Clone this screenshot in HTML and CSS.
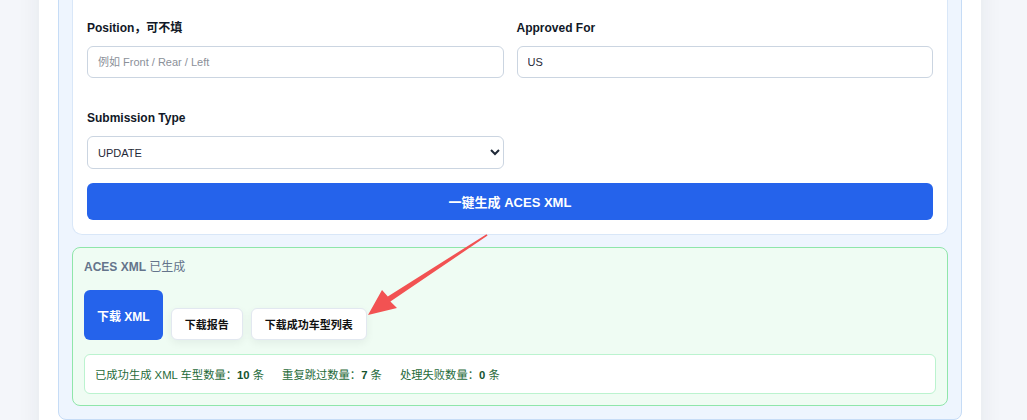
FILE: index.html
```html
<html>
<head>
<meta charset="utf-8">
<link rel="stylesheet" href="styles.css">
</head>
<body>
<div class="panel">
<div class="section">
	<div class="card">
		<div class="grid">
			<div class="field">
				<label class="lbl">Position，可不填</label>
				<input class="inp" type="text" placeholder="例如 Front / Rear / Left">
			</div>
			<div class="field">
				<label class="lbl">Approved For</label>
				<input class="inp" type="text" value="US">
			</div>
			<div class="field">
				<label class="lbl">Submission Type</label>
				<select class="inp sel">
					<option>UPDATE</option>
					<option>FULL</option>
				</select>
			</div>
		</div>
		<button class="gen_btn">一键生成 ACES XML</button>
	</div>

	<div class="result">
		<div class="result_title"><b>ACES XML</b> 已生成</div>
		<div class="dl_row">
			<button class="dl_main">下载 XML</button>
			<button class="dl_sub">下载报告</button>
			<button class="dl_sub">下载成功车型列表</button>
		</div>
		<div class="stats">
			<span>已成功生成 XML 车型数量：<b>10</b> 条</span>
			<span>重复跳过数量：<b>7</b> 条</span>
			<span>处理失败数量：<b>0</b> 条</span>
		</div>
	</div>
</div>
</div>

<svg class="arrow" width="1027" height="420" viewBox="0 0 1027 420">
	<polygon fill="#f25252" points="486.5,234.2 387.8,296.4 382,290 368,315 397,308 390.4,301.4 487.6,235.6" />
</svg>
</body>
</html>
```

FILE: styles.css
```css
body {
	margin: 0;
	background-color: #f4f6fa;
	font-family: "Liberation Sans", Arial, "Noto Sans CJK SC", sans-serif;
	overflow: hidden;
}
.panel {
	width: 904px;
	margin: -60px 0 0 39px;
	padding: 0 19px 40px 19px;
	background-color: #ffffff;
	box-shadow: 0 0 22px rgba(30, 41, 59, 0.07);
}
.section {
	background-color: #eef5fe;
	border: 1px solid #c6dcf6;
	border-radius: 8px;
	padding: 0 13px 13px 13px;
}
.card {
	background-color: #ffffff;
	border: 1px solid #d9e7f8;
	border-top: none;
	border-radius: 0 0 10px 10px;
	padding: 79px 14px 14px 14px;
}
.grid {
	display: grid;
	grid-template-columns: 1fr 1fr;
	column-gap: 13px;
	row-gap: 32px;
}
.field {
	display: flex;
	flex-direction: column;
}
.lbl {
	font-size: 12px;
	font-weight: bold;
	color: #111827;
	line-height: 16px;
	margin-bottom: 10px;
}
.inp {
	height: 32px;
	box-sizing: border-box;
	border: 1px solid #cbd5e1;
	border-radius: 6px;
	padding: 0 10px;
	font-family: inherit;
	font-size: 11px;
	color: #1f2937;
	background-color: #ffffff;
	outline: none;
}
.inp::placeholder {
	color: #8b9099;
}
.sel {
	padding: 0 6px;
	height: 33px;
}
.gen_btn {
	display: block;
	width: 100%;
	height: 37px;
	margin-top: 14px;
	border: none;
	border-radius: 6px;
	background-color: #2563eb;
	color: #ffffff;
	font-family: inherit;
	font-size: 13px;
	font-weight: bold;
}
.result {
	margin-top: 12px;
	background-color: #effcf3;
	border: 1px solid #8fe6aa;
	border-radius: 8px;
	padding: 11px 11px 11px 11px;
}
.result_title {
	font-size: 12px;
	line-height: 16px;
	color: #64748b;
}
.dl_row {
	display: flex;
	align-items: flex-end;
	gap: 8px;
	margin-top: 15px;
}
.dl_main {
	height: 50px;
	padding: 0 13px;
	border: none;
	border-radius: 6px;
	background-color: #2563eb;
	color: #ffffff;
	font-family: inherit;
	font-size: 12px;
	font-weight: bold;
}
.dl_sub {
	height: 32px;
	padding: 0 13px;
	border: 1px solid #e2e8f0;
	border-radius: 6px;
	background-color: #ffffff;
	color: #111111;
	font-family: inherit;
	font-size: 11px;
	font-weight: bold;
	box-shadow: 0 3px 8px rgba(15, 23, 42, 0.06);
}
.stats {
	display: flex;
	gap: 18px;
	margin-top: 14px;
	height: 40px;
	box-sizing: border-box;
	align-items: center;
	padding: 0 10px;
	background-color: #ffffff;
	border: 1px solid #bbf3cf;
	border-radius: 6px;
	font-size: 11.3px;
	color: #1f6b3a;
}
.stats b {
	color: #14532d;
}
.arrow {
	position: absolute;
	left: 0;
	top: 0;
	pointer-events: none;
}
```
